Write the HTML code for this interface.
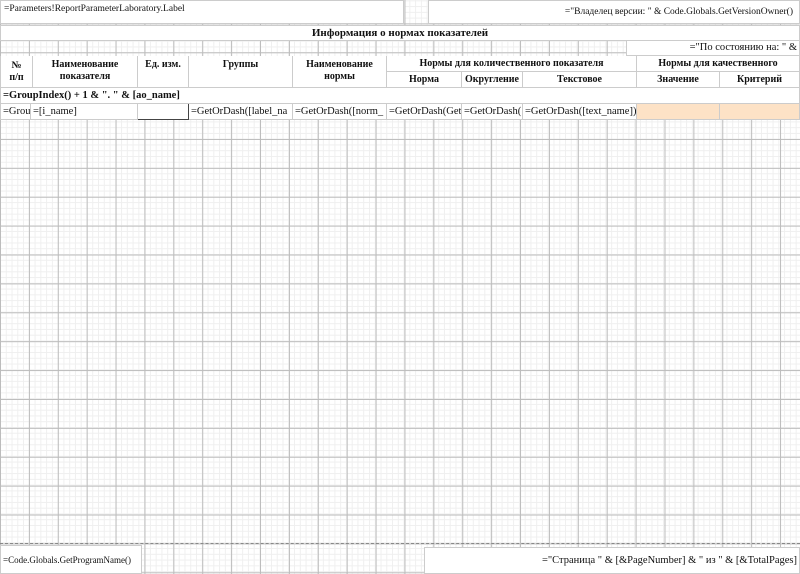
<!DOCTYPE html>
<html><head><meta charset="utf-8"><style>
*{margin:0;padding:0;box-sizing:border-box}
body{width:800px;height:574px;overflow:hidden;position:relative;background:#fff;font-family:"Liberation Serif","Noto Serif CJK SC",serif;color:#111}
.grid{position:absolute;left:0;top:0;width:800px;height:574px;
background-image:
linear-gradient(to right,#bcbcbc 1px,transparent 1px),
linear-gradient(to bottom,#bcbcbc 1px,transparent 1px),
linear-gradient(to right,#efefef 1px,transparent 1px),
linear-gradient(to bottom,#efefef 1px,transparent 1px);
background-size:28.9px 28.9px,28.9px 28.9px,5.78px 5.78px,5.78px 5.78px;
background-position:0 23.4px,0 23.4px,0 23.4px,0 23.4px}
.b{position:absolute;background:#fff;border:1px solid #ccc;font-size:10px;white-space:nowrap;overflow:hidden;line-height:14px}
.c{position:absolute;background:#fff;border-right:1px solid #ccc;border-bottom:1px solid #ccc;font-size:10px;white-space:nowrap;overflow:hidden;display:flex;align-items:center;justify-content:center;text-align:center;font-weight:bold;line-height:12px}
.d{position:absolute;background:#fff;border-right:1px solid #ccc;border-bottom:1px solid #ccc;font-size:10.5px;white-space:nowrap;overflow:hidden;line-height:15px;padding-left:2px}
</style></head><body>
<div class="grid"></div>
<div class="b" style="left:0;top:0;width:404px;height:24px;padding:1px 3px;font-size:9.5px">=Parameters!ReportParameterLaboratory.Label</div>
<div class="b" style="left:428px;top:0;width:372px;height:24px;padding:0 6px;font-size:9.5px;text-align:right;line-height:22px">="Владелец версии: " &amp; Code.Globals.GetVersionOwner()</div>
<div class="b" style="left:0;top:25px;width:800px;height:16px;text-align:center;font-weight:bold;font-size:11px;padding-top:0">Информация о нормах показателей</div>
<div class="b" style="left:626px;top:41px;width:174px;height:15px;text-align:right;padding-right:2px;font-size:10.5px;border-top:none">="По состоянию на: " &amp;</div>
<div style="position:absolute;left:0;top:56px;width:800px;height:64px;background:#fff;border-top:1px solid #ccc"></div>
<div class="c" style="left:0;top:56px;width:33px;height:32px;border-left:1px solid #ccc">№<br>п/п</div>
<div class="c" style="left:33px;top:56px;width:105px;height:32px;align-items:flex-start;padding-top:3px">Наименование<br>показателя</div>
<div class="c" style="left:138px;top:56px;width:51px;height:32px;align-items:flex-start;padding-top:3px">Ед. изм.</div>
<div class="c" style="left:189px;top:56px;width:104px;height:32px;align-items:flex-start;padding-top:3px">Группы</div>
<div class="c" style="left:293px;top:56px;width:94px;height:32px;align-items:flex-start;padding-top:3px">Наименование<br>нормы</div>
<div class="c" style="left:387px;top:56px;width:250px;height:16px">Нормы для количественного показателя</div>
<div class="c" style="left:637px;top:56px;width:163px;height:16px">Нормы для качественного</div>
<div class="c" style="left:387px;top:72px;width:75px;height:16px">Норма</div>
<div class="c" style="left:462px;top:72px;width:61px;height:16px">Округление</div>
<div class="c" style="left:523px;top:72px;width:114px;height:16px">Текстовое</div>
<div class="c" style="left:637px;top:72px;width:83px;height:16px">Значение</div>
<div class="c" style="left:720px;top:72px;width:80px;height:16px">Критерий</div>
<div class="d" style="left:0;top:88px;width:800px;height:16px;font-weight:bold;border-left:1px solid #ccc">=GroupIndex() + 1 &amp; ". " &amp; [ao_name]</div>
<div class="d" style="left:0;top:104px;width:31px;height:16px;border-left:1px solid #ccc">=Grou</div>
<div class="d" style="left:31px;top:104px;width:107px;height:16px">=[i_name]</div>
<div class="d" style="left:138px;top:104px;width:51px;height:16px;border-right:1px solid #444;border-bottom:1px solid #444"></div>
<div class="d" style="left:189px;top:104px;width:104px;height:16px">=GetOrDash([label_na</div>
<div class="d" style="left:293px;top:104px;width:94px;height:16px">=GetOrDash([norm_</div>
<div class="d" style="left:387px;top:104px;width:75px;height:16px">=GetOrDash(Get</div>
<div class="d" style="left:462px;top:104px;width:61px;height:16px">=GetOrDash(</div>
<div class="d" style="left:523px;top:104px;width:114px;height:16px">=GetOrDash([text_name])</div>
<div class="d" style="left:637px;top:104px;width:83px;height:16px;background:#fde2c6"></div>
<div class="d" style="left:720px;top:104px;width:80px;height:16px;background:#fde2c6"></div>
<div style="position:absolute;left:0;top:543px;width:800px;border-top:1px dashed #888"></div>
<div class="b" style="left:0;top:545px;width:142px;height:29px;font-size:9px;line-height:28px;padding-left:2px">=Code.Globals.GetProgramName()</div>
<div class="b" style="left:424px;top:547px;width:376px;height:27px;font-size:10.5px;line-height:26px;text-align:right;padding-right:2px">="Страница " &amp; [&amp;PageNumber] &amp; " из " &amp; [&amp;TotalPages]</div>
</body></html>
